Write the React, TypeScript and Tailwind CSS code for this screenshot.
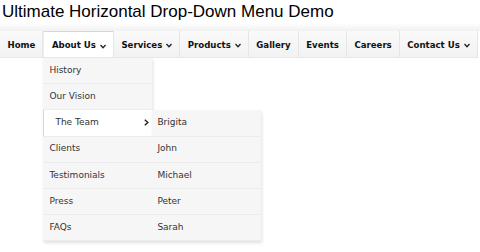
import React from "react";

const navItems = [
  { label: "Home", drop: false },
  { label: "About Us", drop: true, active: true },
  { label: "Services", drop: true },
  { label: "Products", drop: true },
  { label: "Gallery", drop: false },
  { label: "Events", drop: false },
  { label: "Careers", drop: false },
  { label: "Contact Us", drop: true },
];

const aboutItems = ["History", "Our Vision", "The Team", "Clients", "Testimonials", "Press", "FAQs"];
const teamItems = ["Brigita", "John", "Michael", "Peter", "Sarah"];

const Chevron = () => (
  <svg width="6" height="5" viewBox="0 0 6 5" className="ml-[4px] mt-[1px] shrink-0">
    <path d="M0.5 1 L3 3.8 L5.5 1" stroke="#222" strokeWidth="1.3" fill="none" />
  </svg>
);

const Arrow = () => (
  <svg width="5" height="7" viewBox="0 0 5 7">
    <path d="M0.8 0.8 L3.8 3.5 L0.8 6.2" stroke="#222" strokeWidth="1.4" fill="none" />
  </svg>
);

export default function App() {
  return (
    <div className="w-[480px] h-[252px] bg-white overflow-hidden font-['DejaVu_Sans',sans-serif] text-[#222]">
      <h1 className="font-['Liberation_Sans',Arial,sans-serif] text-[17px] leading-[22px] text-black pl-[2px] pt-[1px]">
        Ultimate Horizontal Drop-Down Menu Demo
      </h1>
      <div className="h-[8px] bg-gradient-to-b from-white to-[#f1f1f1]" />
      <ul className="flex h-[27px] bg-gradient-to-b from-[#fafafa] to-[#f2f2f2] border-b border-[#e8e8e8] w-[478px]">
        {navItems.map((it) => (
          <li
            key={it.label}
            className={
              "relative flex items-center whitespace-nowrap pt-[2px] pl-[7.5px] pr-[7px] text-[8.6px] font-bold text-[#111] border-r border-[#e6e6e6] " +
              (it.active ? "bg-white border-t-[1.5px] border-t-[#f2d98a] border-l border-l-[#ececec]" : "")
            }
          >
            {it.label}
            {it.drop && <Chevron />}
            {it.active && (
              <div className="absolute left-[-1px] top-[26px] z-10 w-[109px] flex flex-col shadow-[1px_2px_3px_rgba(0,0,0,0.12)]">
                {aboutItems.map((s) => (
                  <div
                    key={s}
                    className={
                      "relative h-[26.2px] flex items-center justify-between pr-[3px] text-[9px] font-normal text-[#333] border-b border-[#ececec] " +
                      (s === "The Team"
                        ? "bg-white border-l-[1.5px] border-l-[#f2d98a] pl-[11px]"
                        : "bg-[#f6f6f6] pl-[6px]")
                    }
                  >
                    {s}
                    {s === "The Team" && (
                      <>
                        <Arrow />
                        <div className="absolute left-[108px] top-0 w-[109px] flex flex-col shadow-[1px_2px_3px_rgba(0,0,0,0.12)]">
                          {teamItems.map((t) => (
                            <div
                              key={t}
                              className="h-[26.2px] flex items-center pl-[5px] bg-[#f6f6f6] border-b border-[#ececec] text-[9px]"
                            >
                              {t}
                            </div>
                          ))}
                        </div>
                      </>
                    )}
                  </div>
                ))}
              </div>
            )}
          </li>
        ))}
      </ul>
    </div>
  );
}
